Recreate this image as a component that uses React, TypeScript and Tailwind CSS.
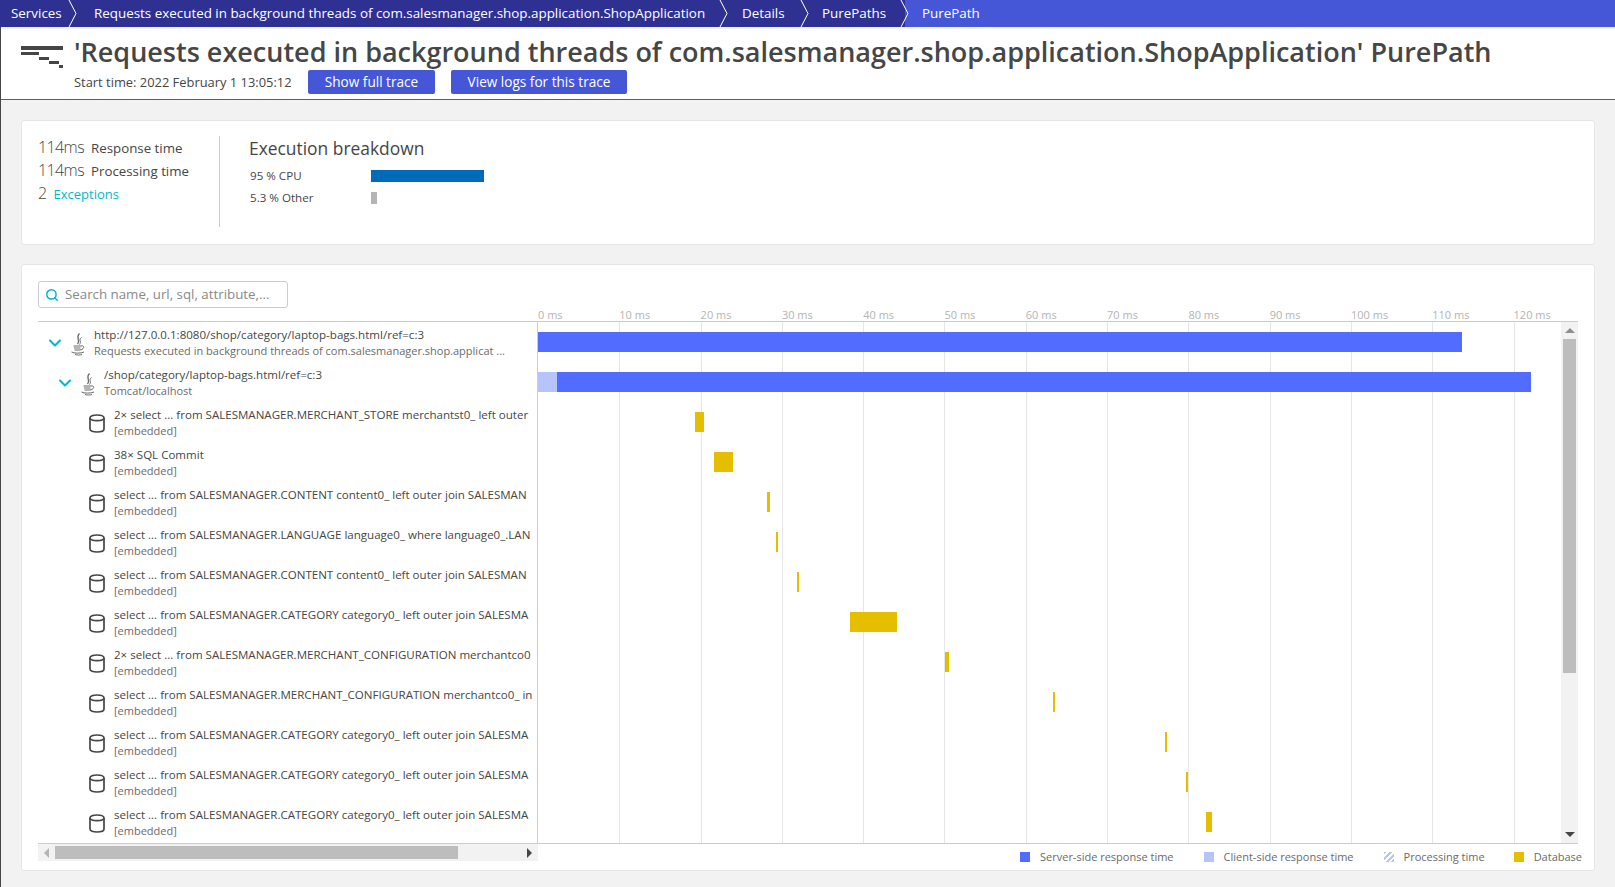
import { ChevronDown, Search } from "lucide-react";
import React from "react";

const crumbs = [
  { label: "Services", w: "w-[73px]", pl: "pl-[11px]" },
  { label: "Requests executed in background threads of com.salesmanager.shop.application.ShopApplication", w: "w-[651px]", pl: "pl-[21px]" },
  { label: "Details", w: "w-[81px]", pl: "pl-[18px]" },
  { label: "PurePaths", w: "w-[100px]", pl: "pl-[17px]" },
];

const ticks = [0, 10, 20, 30, 40, 50, 60, 70, 80, 90, 100, 110, 120];

const queries = [
  { text: "2× select ... from SALESMANAGER.MERCHANT_STORE merchantst0_ left outer", left: 157, width: 9 },
  { text: "38× SQL Commit", left: 176, width: 19 },
  { text: "select ... from SALESMANAGER.CONTENT content0_ left outer join SALESMAN", left: 229, width: 3 },
  { text: "select ... from SALESMANAGER.LANGUAGE language0_ where language0_.LAN", left: 238, width: 2 },
  { text: "select ... from SALESMANAGER.CONTENT content0_ left outer join SALESMAN", left: 259, width: 2 },
  { text: "select ... from SALESMANAGER.CATEGORY category0_ left outer join SALESMA", left: 312, width: 47 },
  { text: "2× select ... from SALESMANAGER.MERCHANT_CONFIGURATION merchantco0", left: 407, width: 4 },
  { text: "select ... from SALESMANAGER.MERCHANT_CONFIGURATION merchantco0_ in", left: 515, width: 2 },
  { text: "select ... from SALESMANAGER.CATEGORY category0_ left outer join SALESMA", left: 627, width: 2 },
  { text: "select ... from SALESMANAGER.CATEGORY category0_ left outer join SALESMA", left: 648, width: 2 },
  { text: "select ... from SALESMANAGER.CATEGORY category0_ left outer join SALESMA", left: 668, width: 6 },
];

function Chevron() {
  return (
    <svg width="10" height="27" viewBox="0 0 10 27" className="absolute right-[-5px] top-0 z-10" fill="none">
      <path d="M1 0 L8 13.5 L1 27" stroke="#ffffff" strokeWidth="1" />
    </svg>
  );
}

function DbIcon() {
  return (
    <svg width="16" height="19" viewBox="0 0 16 19" fill="none" stroke="#454646" strokeWidth="1.7" className="ml-[1px] mt-[2px]">
      <path d="M1 4 C1 2 4 1 8 1 C12 1 15 2 15 4 V15 C15 17 12 18 8 18 C4 18 1 17 1 15 Z" />
      <path d="M1 4 C1 5.8 4 6.6 8 6.6 C12 6.6 15 5.8 15 4" />
    </svg>
  );
}

function JavaIcon() {
  return (
    <svg width="16" height="24" viewBox="0 0 16 24" fill="none" stroke="#6b6b6b" strokeWidth="1" className="ml-[1px] mt-[6px]">
      <path d="M9.5 0.5 C5 4.5 11 6.5 7.5 11" strokeWidth="1.3" />
      <path d="M11.5 4.5 C8 7 12 8.5 9.5 11.5" />
      <path d="M3.5 13 H11" />
      <path d="M4 15 H10.5" />
      <path d="M4.5 17 H10" />
      <path d="M11 13 C15 12 14.5 16.5 10 17" />
      <path d="M1.5 19 C4 20.5 11 20.5 14 19" />
      <path d="M5 21.5 C7 22.2 10 22.2 12 21.5" />
    </svg>
  );
}

function Triangle({ dir, color }: { dir: "up" | "down" | "left" | "right"; color: string }) {
  const d = { up: "M0 6 L5 1 L10 6 Z", down: "M0 1 L10 1 L5 6 Z", left: "M6 0 L6 10 L1 5 Z", right: "M1 0 L1 10 L6 5 Z" }[dir];
  const size = dir === "up" || dir === "down" ? "w-[10px] h-[7px]" : "w-[7px] h-[10px]";
  const box = dir === "up" || dir === "down" ? "0 0 10 7" : "0 0 7 10";
  return (
    <svg viewBox={box} className={size} fill={color}>
      <path d={d} />
    </svg>
  );
}

function Metric({ value, label, link }: { value: string; label: string; link?: boolean }) {
  return (
    <div className="flex items-baseline h-[23px]">
      <span className="text-[16px] font-light tracking-[-0.6px] text-[#454646] mr-[7px]">{value}</span>
      <span className={link ? "text-[13px] text-[#00b9cc]" : "text-[13.3px] text-[#454646]"}>{label}</span>
    </div>
  );
}

function TreeRow({ indent, iconW, icon, title, sub, chevron }: { indent: string; iconW: string; icon: React.ReactNode; title: string; sub: string; chevron?: boolean }) {
  return (
    <div className={`h-[40px] flex items-center ${indent}`}>
      <div className="w-[22px] flex-shrink-0 flex items-center">
        {chevron && <ChevronDown className="w-[20px] h-[20px] -ml-[2px] mt-[2px] text-[#00b9cc]" strokeWidth={2.5} />}
      </div>
      <div className={`flex-shrink-0 flex items-center ${iconW}`}>{icon}</div>
      <div className="min-w-0 flex-1 pt-[2px] overflow-hidden whitespace-nowrap leading-[16px] text-[#454646]">
        <div className="overflow-hidden text-[11.55px]">{title}</div>
        <div className="overflow-hidden text-[11px] text-[#6b6b6b]">{sub}</div>
      </div>
    </div>
  );
}

function LegendItem({ label, swatch, ml }: { label: string; swatch: string; ml: string }) {
  return (
    <div className={`flex items-center ${ml}`}>
      <span className={`w-[10px] h-[10px] mr-[10px] ${swatch}`} />
      <span className="text-[11px] text-[#6b6b6b]">{label}</span>
    </div>
  );
}

export default function App() {
  return (
    <div className="h-[887px] w-full overflow-hidden bg-[#f2f2f2] font-['Open_Sans',sans-serif] text-[#454646] flex flex-col">
      <nav className="h-[27px] flex-shrink-0 bg-[#4556d7] flex text-[13.4px] text-white">
        {crumbs.map((c) => (
          <div key={c.label} className={`relative h-full bg-[#2e3192] flex items-center whitespace-nowrap ${c.w} ${c.pl}`}>
            {c.label}
            <Chevron />
          </div>
        ))}
        <div className="flex items-center pl-[17px]">PurePath</div>
      </nav>

      <div className="flex-1 min-h-0 border-l border-[#454646] flex flex-col">
        <header className="h-[73px] flex-shrink-0 bg-white border-t-2 border-t-[#f2f2f2] border-b border-b-[#4556d7] flex">
          <div className="w-[73px] flex-shrink-0 pl-[20px] pt-[17px]">
            <svg width="42" height="22" viewBox="0 0 42 22" fill="#454646">
              <rect x="0" y="0" width="42" height="4" />
              <rect x="0" y="6" width="18" height="3" />
              <rect x="18" y="11" width="10" height="3" />
              <rect x="28" y="15" width="10" height="3" />
              <rect x="38" y="19" width="4" height="3" />
            </svg>
          </div>
          <div className="min-w-0">
            <h1 className="text-[27px] leading-[36px] mt-[5px] font-semibold whitespace-nowrap">
              'Requests executed in background threads of com.salesmanager.shop.application.ShopApplication' PurePath
            </h1>
            <div className="flex items-center">
              <span className="text-[12.9px] w-[234px] pt-[2px]">Start time: 2022 February 1 13:05:12</span>
              <button type="button" className="h-[24px] w-[127px] rounded-[2px] bg-[#4556d7] text-white text-[13.6px] font-medium mr-[16px]">
                Show full trace
              </button>
              <button type="button" className="h-[24px] w-[176px] rounded-[2px] bg-[#4556d7] text-white text-[13.6px] font-medium">
                View logs for this trace
              </button>
            </div>
          </div>
        </header>

        <main className="flex-1 min-h-0 pl-[20px] pr-[20px] pt-[20px]">
          <section className="h-[125px] bg-white rounded-[3px] border border-[#e6e6e6] flex pl-[16px] pt-[15px]">
            <div className="w-[181px] flex-shrink-0 h-[92px] -mt-[1px]">
              <Metric value="114ms" label="Response time" />
              <Metric value="114ms" label="Processing time" />
              <Metric value="2" label="Exceptions" link />
            </div>
            <div className="w-px h-[91px] bg-[#cccccc]" />
            <div className="pl-[29px]">
              <h2 className="text-[17.4px] leading-[24px]">Execution breakdown</h2>
              <div className="flex items-center h-[16px] mt-[8px] text-[11.6px]">
                <span className="w-[121px] ml-[1px]">95 % CPU</span>
                <span className="w-[113px] h-[12px] bg-[#006bb8]" />
              </div>
              <div className="flex items-center h-[16px] mt-[6px] text-[11.6px]">
                <span className="w-[121px] ml-[1px]">5.3 % Other</span>
                <span className="w-[6px] h-[12px] bg-[#b4b4b4]" />
              </div>
            </div>
          </section>

          <section className="h-[607px] mt-[19px] bg-white rounded-[3px] border border-[#e6e6e6] pl-[16px] pr-[16px] pt-[16px]">
            <div className="w-[250px] h-[27px] rounded-[3px] border border-[#cccccc] flex items-center pl-[6px]">
              <Search className="w-[14px] h-[14px] text-[#00b4c7] mr-[6px]" strokeWidth={2.5} />
              <span className="text-[13.3px] text-[#898989]">Search name, url, sql, attribute,...</span>
            </div>

            <div className="flex h-[13px] text-[11px] leading-[14px] text-[#b4b4b4]">
              <div className="w-[500px] flex-shrink-0" />
              <div className="flex">
                {ticks.map((t) => (
                  <span key={t} className="w-[81.3px] flex-shrink-0">{t} ms</span>
                ))}
              </div>
            </div>

            <div className="flex border-t border-[#cccccc] h-[522px]">
              <div className="w-[499px] flex-shrink-0 flex flex-col">
                <TreeRow indent="pl-[9px]" iconW="w-[25px]" chevron icon={<JavaIcon />} title="http://127.0.0.1:8080/shop/category/laptop-bags.html/ref=c:3" sub="Requests executed in background threads of com.salesmanager.shop.applicat ..." />
                <TreeRow indent="pl-[19px]" iconW="w-[25px]" chevron icon={<JavaIcon />} title="/shop/category/laptop-bags.html/ref=c:3" sub="Tomcat/localhost" />
                {queries.map((q, i) => (
                  <div key={i} className="pr-[5px]">
                    <TreeRow indent="pl-[28px]" iconW="w-[26px]" icon={<DbIcon />} title={q.text} sub="[embedded]" />
                  </div>
                ))}
              </div>

              <div className="relative flex-1 min-w-0 border-l border-[#cccccc]">
                <div className="absolute inset-0 flex pl-[1px] pointer-events-none">
                  {ticks.slice(1).map((t) => (
                    <div key={t} className="w-[81.3px] flex-shrink-0 border-r border-[#e6e6e6]" />
                  ))}
                </div>
                <div className="relative mr-[17px]">
                  <div className="h-[40px] flex items-center">
                    <div className="h-[20px] bg-[#526cff] w-[924px]" />
                  </div>
                  <div className="h-[40px] flex items-center">
                    <div className="h-[20px] bg-[#b7c3fb] w-[19px]" />
                    <div className="h-[20px] bg-[#526cff] w-[974px]" />
                  </div>
                  {queries.map((q, i) => (
                    <div key={i} className="h-[40px] flex items-center">
                      <div className="h-[20px] bg-[#e6be00]" style={{ marginLeft: q.left, width: q.width }} />
                    </div>
                  ))}
                </div>
                <div className="absolute right-0 top-0 bottom-0 w-[17px] bg-[#f2f2f2] flex flex-col items-center">
                  <div className="h-[17px] flex items-center justify-center">
                    <Triangle dir="up" color="#8f8f8f" />
                  </div>
                  <div className="w-[13px] h-[334px] bg-[#bdbdbd]" />
                  <div className="flex-1" />
                  <div className="h-[17px] flex items-center justify-center">
                    <Triangle dir="down" color="#454646" />
                  </div>
                </div>
              </div>
            </div>

            <div className="flex border-t border-[#cccccc] h-[26px]">
              <div className="w-[500px] flex-shrink-0 h-[17px] bg-[#f2f2f2] flex items-center">
                <div className="w-[17px] flex justify-center">
                  <Triangle dir="left" color="#b4b4b4" />
                </div>
                <div className="w-[403px] h-[13px] bg-[#bdbdbd]" />
                <div className="flex-1" />
                <div className="w-[17px] flex justify-center">
                  <Triangle dir="right" color="#454646" />
                </div>
              </div>
              <div className="flex-1 flex items-start h-[26px] pt-[5px] pl-[482px] whitespace-nowrap">
                <LegendItem label="Server-side response time" swatch="bg-[#526cff]" ml="ml-0" />
                <LegendItem label="Client-side response time" swatch="bg-[#b7c3fb]" ml="ml-[30px]" />
                <LegendItem label="Processing time" swatch="bg-[repeating-linear-gradient(135deg,#b7c3fb_0,#b7c3fb_2px,#ffffff_2px,#ffffff_4px)]" ml="ml-[30px]" />
                <LegendItem label="Database" swatch="bg-[#e6be00]" ml="ml-[29px]" />
              </div>
            </div>
          </section>
        </main>
      </div>
    </div>
  );
}
